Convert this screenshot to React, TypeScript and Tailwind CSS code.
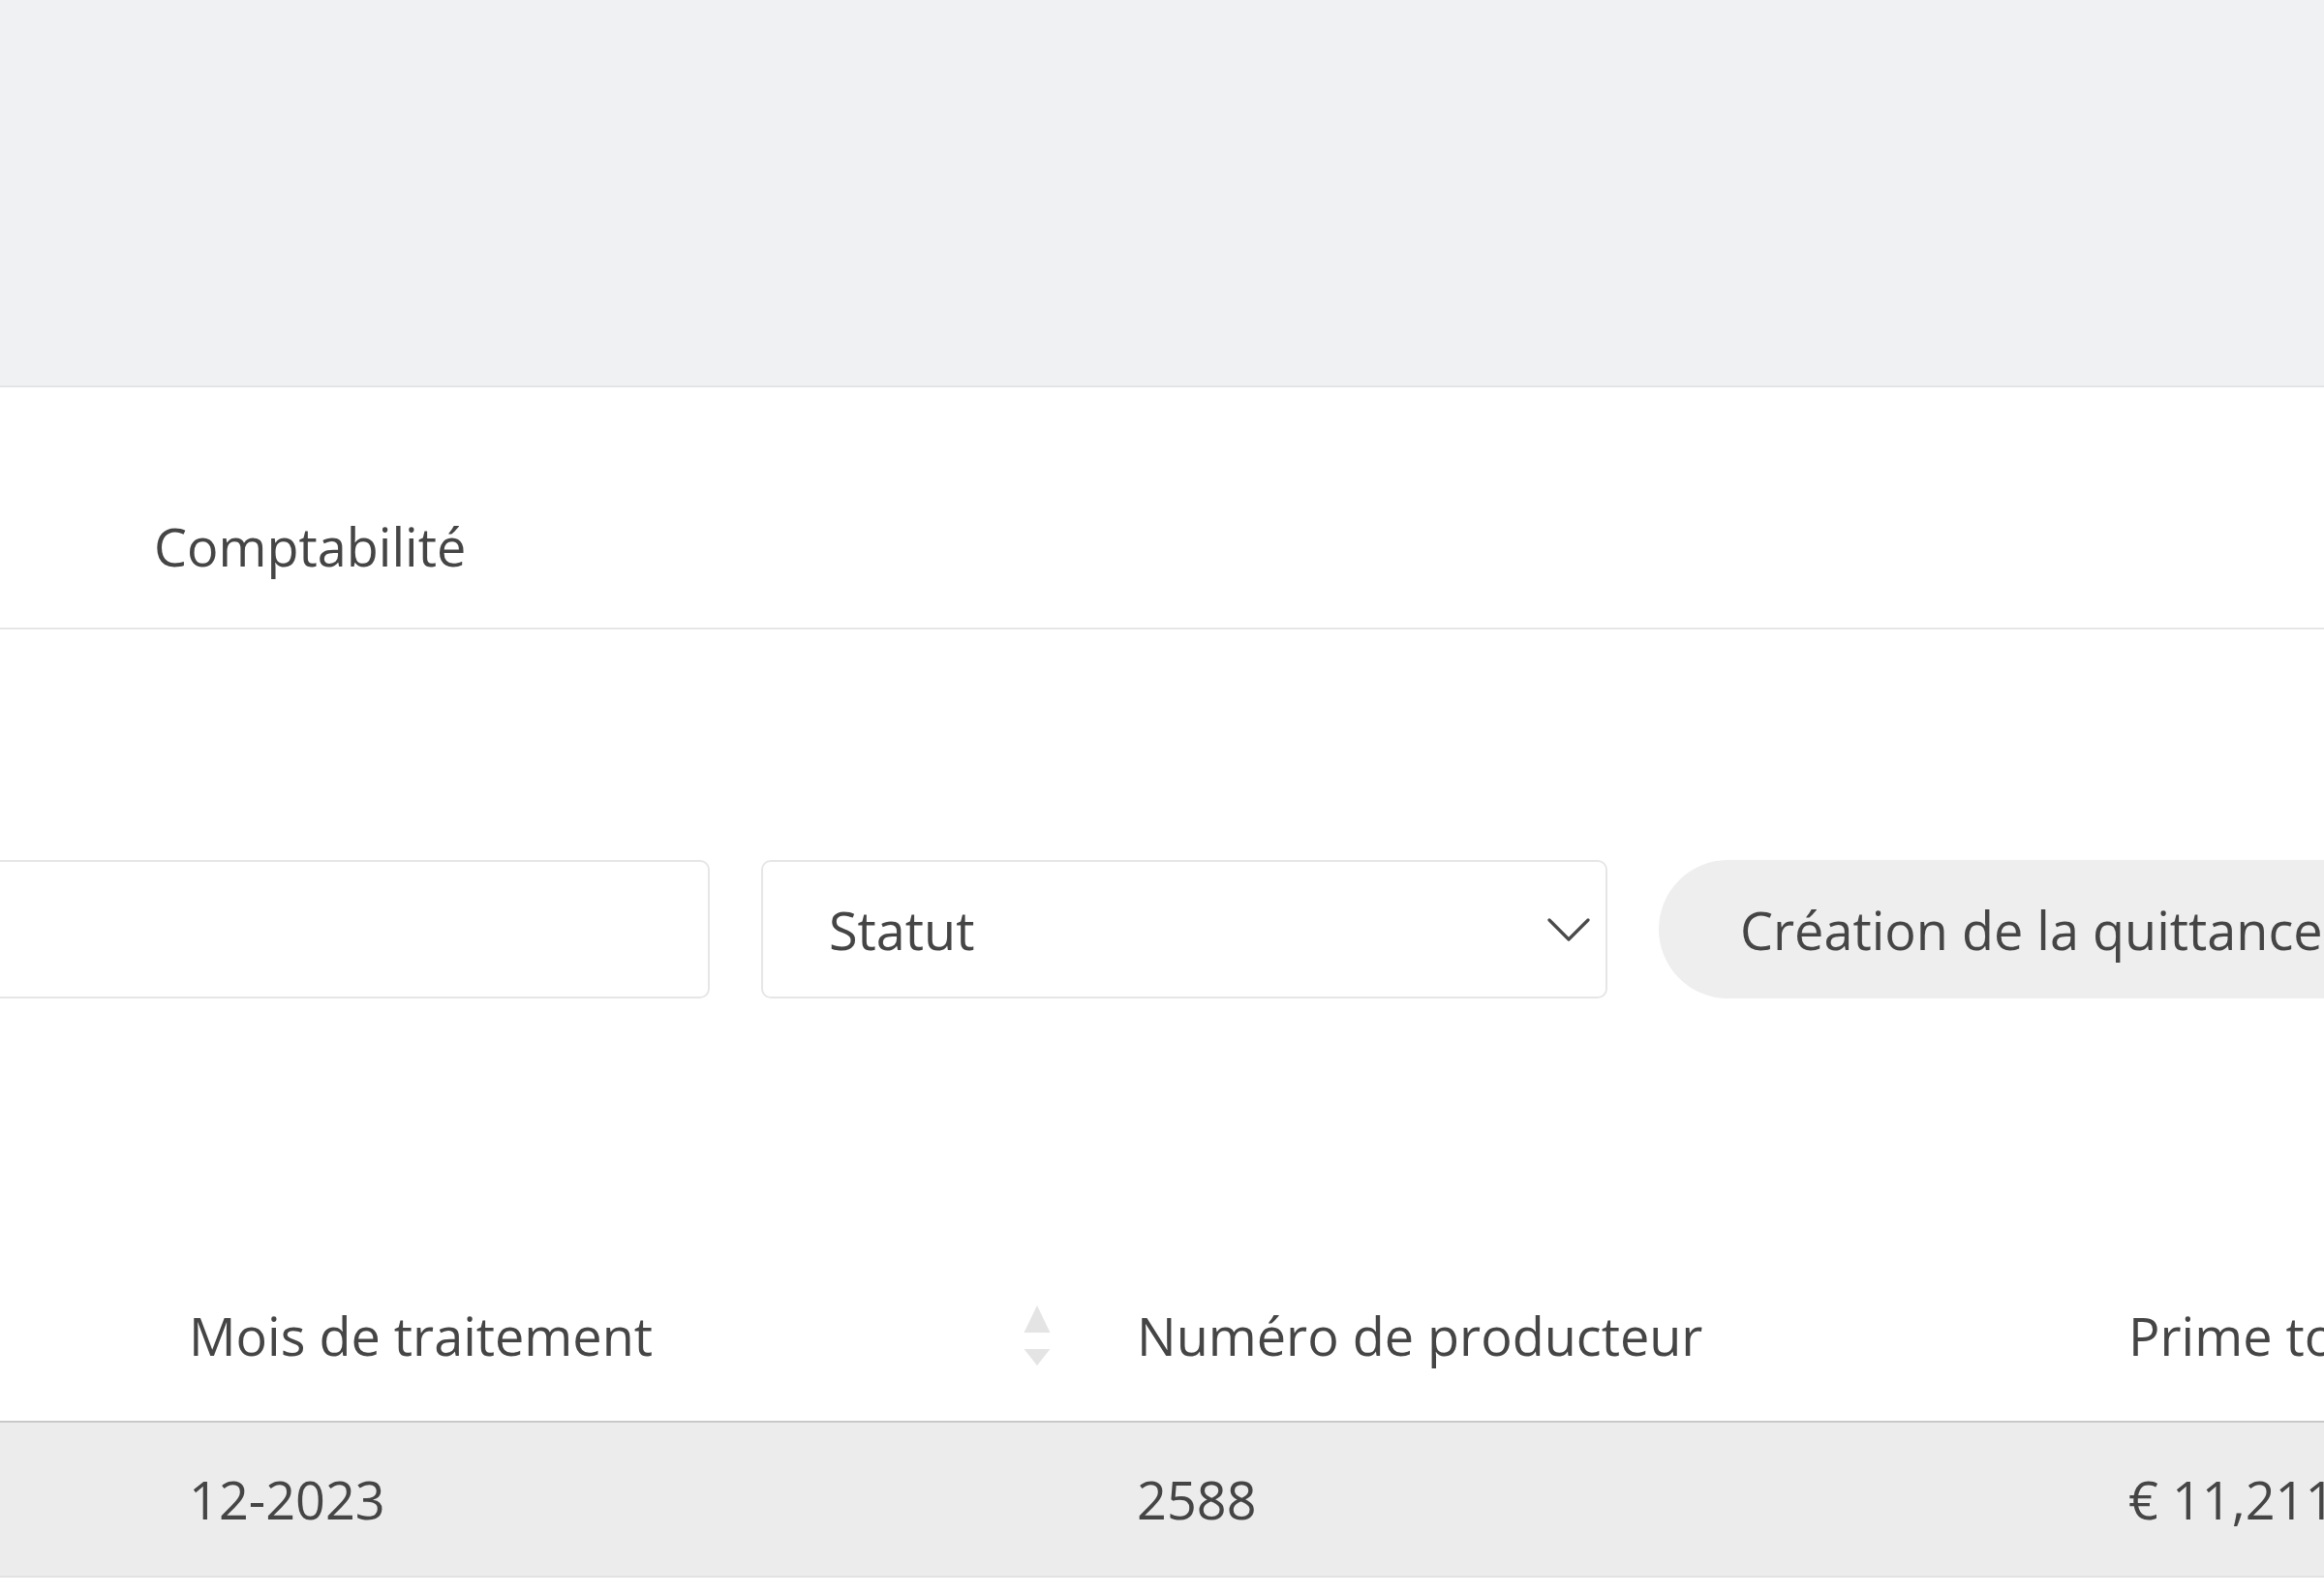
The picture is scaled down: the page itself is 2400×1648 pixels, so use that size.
const font = { fontFamily: '"Open Sans", "Noto Sans", sans-serif' }

// Small up/down sort arrows shown next to a sortable column header
function SortArrows() {
  return (
    <svg width="28" height="64" viewBox="0 0 28 64" className="shrink-0">
      <path d="M14 0 L27.5 28 L0.5 28 Z" fill="#e4e4e4" />
      <path d="M0.5 45 L27.5 45 L14 62 Z" fill="#e4e4e4" />
    </svg>
  )
}

function Chevron() {
  return (
    <svg width="44" height="26" viewBox="0 0 44 26" fill="none" className="shrink-0">
      <path d="M2 3 L22 23 L42 3" stroke="#4a4a4a" strokeWidth="3.2" strokeLinecap="round" strokeLinejoin="round" />
    </svg>
  )
}

export default function App() {
  return (
    <div
      className="w-[2400px] h-[1648px] overflow-hidden bg-white text-[#454545] text-[54px]"
      style={font}
    >
      {/* page header band */}
      <div className="h-[400px] bg-[#f0f1f3] border-b-2 border-[#e3e4e6]" />

      {/* tabs */}
      <div className="h-[250px] border-b-2 border-[#e6e6e6] pt-[124px] pl-[159px]">
        <span className="leading-[80px]">Comptabilité</span>
      </div>

      {/* filters */}
      <div className="flex gap-[53px] ml-[-141px] mt-[238px]">
        <div className="w-[874px] h-[143px] shrink-0 rounded-[10px] border-2 border-[#e6e6e6] bg-white" />
        <div className="w-[874px] h-[143px] shrink-0 rounded-[10px] border-2 border-[#e6e6e6] bg-white flex items-center justify-between pl-[68px] pr-[16px]">
          <span className="leading-[80px]">Statut</span>
          <Chevron />
        </div>
        <button className="h-[143px] shrink-0 rounded-full bg-[#eeeeee] pl-[84px] pr-[84px] flex items-center whitespace-nowrap">
          <span className="leading-[80px]">Création de la quittance</span>
        </button>
      </div>

      {/* table */}
      <div className="mt-[270px]">
        <div className="flex items-center h-[168px] pb-[9px] border-b-2 border-[#c9c9c9] pl-[125px]">
          <div className="w-[985px] shrink-0 flex items-center justify-between pl-[70px] pr-[25px]">
            <span>Mois de traitement</span>
            <SortArrows />
          </div>
          <div className="w-[1024px] shrink-0 pl-[64px]">Numéro de producteur</div>
          <div className="pl-[64px] whitespace-nowrap">Prime totale</div>
        </div>
        <div className="flex items-center h-[160px] bg-[#ececec] border-b-2 border-[#e2e2e2]">
          <div className="w-[1110px] shrink-0 pl-[195px]">12-2023</div>
          <div className="w-[1024px] shrink-0 pl-[64px]">2588</div>
          <div className="pl-[64px] whitespace-nowrap">€ 11,211.00</div>
        </div>
      </div>
    </div>
  )
}
